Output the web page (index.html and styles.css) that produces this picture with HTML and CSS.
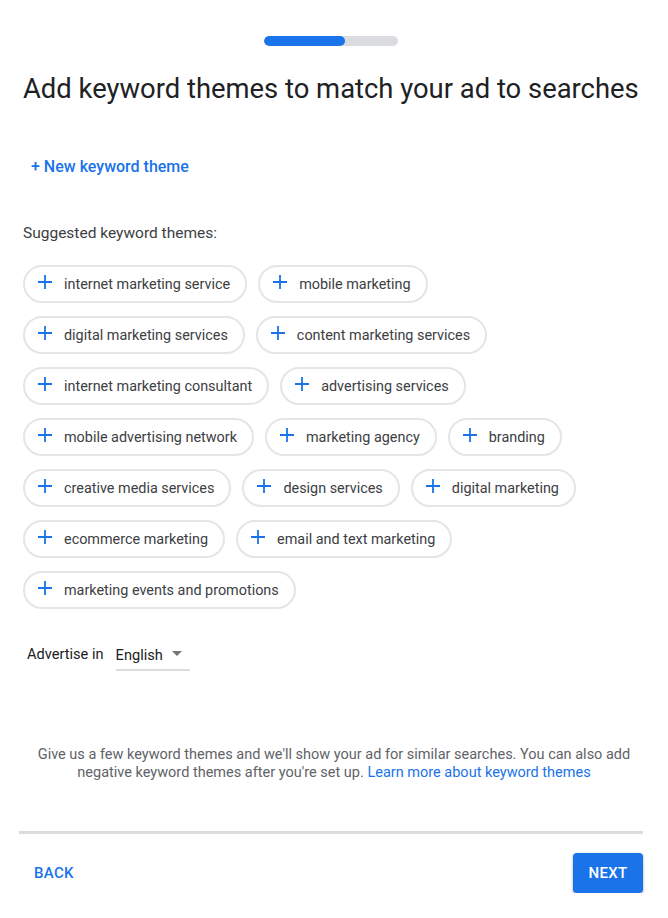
FILE: index.html
```html
<!DOCTYPE html>
<html lang="en">
<head>
<meta charset="utf-8">
<title>Keyword themes</title>
<link rel="stylesheet" href="styles.css">
</head>
<body>
<div class="page">
  <div class="progress"><div class="progress-fill"></div></div>
  <h1 class="title">Add keyword themes to match your ad to searches</h1>
  <a class="new-theme" href="#">+ New keyword theme</a>
  <p class="suggested">Suggested keyword themes:</p>
  <div class="chips">
    <button class="chip"><svg class="plus" viewBox="0 0 14 14"><path d="M7 0v14M0 7h14"/></svg><span>internet marketing service</span></button>
    <button class="chip"><svg class="plus" viewBox="0 0 14 14"><path d="M7 0v14M0 7h14"/></svg><span>mobile marketing</span></button>
    <button class="chip"><svg class="plus" viewBox="0 0 14 14"><path d="M7 0v14M0 7h14"/></svg><span>digital marketing services</span></button>
    <button class="chip"><svg class="plus" viewBox="0 0 14 14"><path d="M7 0v14M0 7h14"/></svg><span>content marketing services</span></button>
    <button class="chip"><svg class="plus" viewBox="0 0 14 14"><path d="M7 0v14M0 7h14"/></svg><span>internet marketing consultant</span></button>
    <button class="chip"><svg class="plus" viewBox="0 0 14 14"><path d="M7 0v14M0 7h14"/></svg><span>advertising services</span></button>
    <button class="chip"><svg class="plus" viewBox="0 0 14 14"><path d="M7 0v14M0 7h14"/></svg><span>mobile advertising network</span></button>
    <button class="chip"><svg class="plus" viewBox="0 0 14 14"><path d="M7 0v14M0 7h14"/></svg><span>marketing agency</span></button>
    <button class="chip"><svg class="plus" viewBox="0 0 14 14"><path d="M7 0v14M0 7h14"/></svg><span>branding</span></button>
    <button class="chip"><svg class="plus" viewBox="0 0 14 14"><path d="M7 0v14M0 7h14"/></svg><span>creative media services</span></button>
    <button class="chip"><svg class="plus" viewBox="0 0 14 14"><path d="M7 0v14M0 7h14"/></svg><span>design services</span></button>
    <button class="chip"><svg class="plus" viewBox="0 0 14 14"><path d="M7 0v14M0 7h14"/></svg><span>digital marketing</span></button>
    <button class="chip"><svg class="plus" viewBox="0 0 14 14"><path d="M7 0v14M0 7h14"/></svg><span>ecommerce marketing</span></button>
    <button class="chip"><svg class="plus" viewBox="0 0 14 14"><path d="M7 0v14M0 7h14"/></svg><span>email and text marketing</span></button>
    <button class="chip"><svg class="plus" viewBox="0 0 14 14"><path d="M7 0v14M0 7h14"/></svg><span>marketing events and promotions</span></button>
  </div>
  <div class="advertise">
    <span class="advertise-label">Advertise in</span>
    <div class="select">
      <span class="select-value">English</span>
      <span class="caret"></span>
    </div>
  </div>
  <p class="help">Give us a few keyword themes and we'll show your ad for similar searches. You can also add negative keyword themes after you're set up. <a href="#" class="link">Learn more about keyword themes</a></p>
  <div class="divider"></div>
  <div class="actions">
    <a href="#" class="back">BACK</a>
    <button class="next">NEXT</button>
  </div>
</div>
</body>
</html>
```
FILE: styles.css
```css
* { box-sizing: border-box; }
html, body { margin: 0; padding: 0; background: #ffffff; }
body {
  font-family: Roboto, "Liberation Sans", Arial, sans-serif;
  color: #3c4043;
  width: 668px;
}
.page {
  display: flex;
  flex-direction: column;
  padding: 36px 0 0 0;
}
.progress {
  align-self: flex-start;
  margin-left: 264px;
  width: 134px;
  height: 10px;
  border-radius: 5px;
  background: #dadce0;
  overflow: hidden;
}
.progress-fill {
  width: 81px;
  height: 100%;
  background: #1a73e8;
  border-radius: 5px;
}
.title {
  margin: 27px 0 0 23px;
  font-size: 27.4px;
  font-weight: 400;
  line-height: 32px;
  color: #202124;
  letter-spacing: 0;
  white-space: nowrap;
}
.new-theme {
  align-self: flex-start;
  margin: 52px 0 0 31px;
  font-size: 16px;
  font-weight: 500;
  line-height: 20px;
  color: #1a73e8;
  text-decoration: none;
}
.suggested {
  margin: 46px 0 0 23px;
  font-size: 15.5px;
  line-height: 20px;
  color: #3c4043;
}
.chips {
  display: flex;
  flex-wrap: wrap;
  gap: 13px 11px;
  margin: 22px 0 0 23px;
  width: 622px;
}
.chip {
  display: flex;
  align-items: center;
  height: 38px;
  padding: 0 15px 0 13px;
  border: 2px solid #e3e5e8;
  border-radius: 19px;
  background: #fff;
  font-family: inherit;
  font-size: 14.4px;
  color: #3c4043;
  cursor: pointer;
}
.plus {
  width: 14px;
  height: 14px;
  margin-right: 12px;
  margin-top: -4px;
  flex: none;
}
.plus path {
  stroke: #1a73e8;
  stroke-width: 1.8;
  fill: none;
}
.advertise {
  display: flex;
  align-items: flex-start;
  margin: 30px 0 0 27px;
}
.advertise-label {
  font-size: 14.6px;
  line-height: 20px;
  color: #202124;
  margin-top: 5px;
  margin-right: 12px;
}
.select {
  display: flex;
  align-items: center;
  width: 74px;
  height: 32px;
  padding-top: 2px;
  border-bottom: 2px solid #dadce0;
}
.select-value {
  font-size: 14.6px;
  line-height: 20px;
  color: #202124;
}
.caret {
  margin-left: 9px;
  margin-top: -4px;
  width: 0;
  height: 0;
  border-left: 5px solid transparent;
  border-right: 5px solid transparent;
  border-top: 5px solid #757575;
}
.help {
  margin: 75px 0 0 0;
  padding: 0 20px;
  text-align: center;
  font-size: 14.5px;
  line-height: 18px;
  color: #5f6368;
}
.link {
  color: #1a73e8;
  text-decoration: none;
}
.divider {
  margin: 49px 0 0 19px;
  width: 624px;
  height: 3px;
  background: #dadce0;
}
.actions {
  display: flex;
  align-items: center;
  justify-content: space-between;
  margin: 19px 0 0 0;
  padding: 0 25px 0 34px;
}
.back {
  font-size: 15px;
  font-weight: 500;
  color: #1a73e8;
  text-decoration: none;
  letter-spacing: 0.3px;
}
.next {
  width: 70px;
  height: 40px;
  border: none;
  border-radius: 4px;
  background: #1a73e8;
  color: #fff;
  font-family: inherit;
  font-size: 15px;
  font-weight: 500;
  letter-spacing: 0.3px;
  box-shadow: 0 1px 3px rgba(60,64,67,0.35), 0 1px 2px rgba(60,64,67,0.2);
}
```
